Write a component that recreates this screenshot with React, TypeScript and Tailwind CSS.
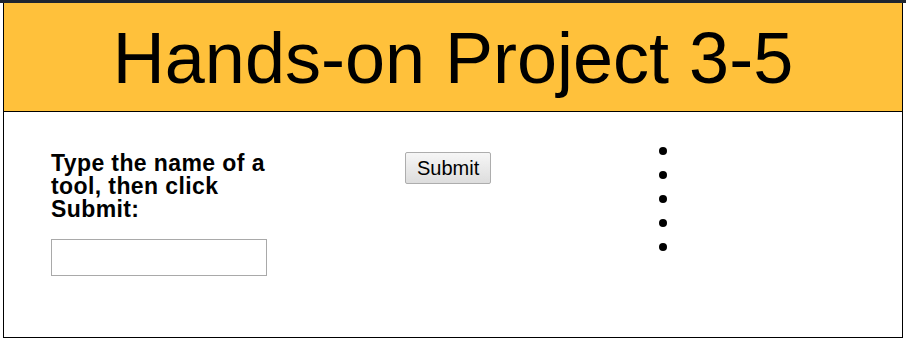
import React from "react";

const App: React.FC = () => {
  return (
    <div className="w-[906px] h-[344px] bg-white" style={{ fontFamily: '"Liberation Sans", Arial, sans-serif' }}>
      {/* top strip */}
      <div className="h-[3px] bg-[#1e2530]" />
      <div className="ml-[3px] w-[900px] h-[335px] border border-t-0 border-black">
        {/* header */}
        <header className="h-[109px] bg-[#ffc13b] border-b border-black flex items-center justify-center">
          <h1 className="text-[72px] leading-none text-black pt-[2px]">Hands-on Project 3-5</h1>
        </header>

        {/* form area */}
        <div className="flex pl-[47px] pt-[38px]">
          <div className="w-[354px] pt-[2px]">
            <label htmlFor="tool" className="block w-[232px] text-[23px] tracking-[0.4px] leading-[23px] font-bold text-black">
              Type the name of a tool, then click Submit:
            </label>
            <input
              id="tool"
              type="text"
              className="mt-[18px] w-[216px] h-[37px] border border-[#a9a9a9] bg-white outline-none"
            />
          </div>
          <div className="w-[250px] mt-[2px]">
            <button className="h-[32px] px-[11px] text-[20px] leading-none text-black border border-[#adadad] rounded-[2px] bg-gradient-to-b from-[#f6f6f6] to-[#dddddd]">
              Submit
            </button>
          </div>
          <ul className="list-disc pl-[27px] -mt-[12px] text-[26px] leading-[24px]">
            {[0, 1, 2, 3, 4].map((i) => (
              <li key={i} className="h-[24px]">&nbsp;</li>
            ))}
          </ul>
        </div>
      </div>
    </div>
  );
};

export default App;
